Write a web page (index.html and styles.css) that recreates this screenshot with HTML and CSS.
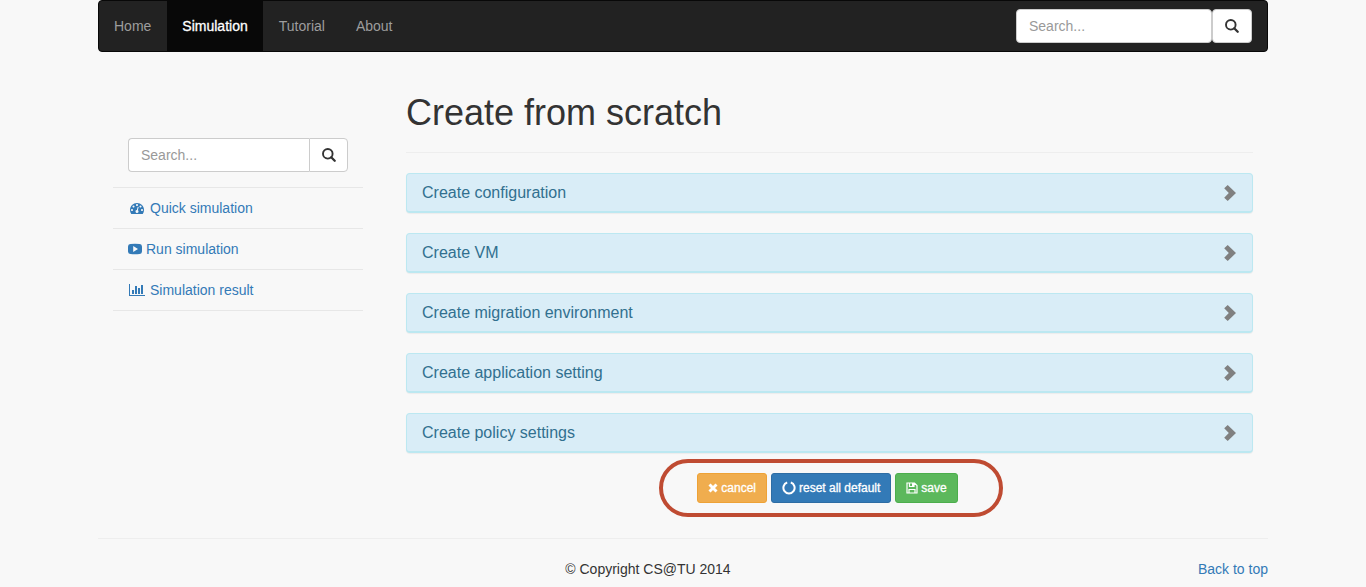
FILE: index.html
```html
<!DOCTYPE html>
<html lang="en">
<head>
<meta charset="utf-8">
<title>Create from scratch</title>
<link rel="stylesheet" href="styles.css">
</head>
<body>
<svg class="sprite" aria-hidden="true">
  <symbol id="search" viewBox="0 0 14 14"><circle cx="5.8" cy="5.8" r="4.8" fill="none" stroke="currentColor" stroke-width="1.9"/><path d="M9.2 9.2L12.7 12.7" fill="none" stroke="currentColor" stroke-width="2.3" stroke-linecap="round"/></symbol>
  <symbol id="chevron" viewBox="0 0 12 16"><path d="M3.7 0L12 8L3.7 16L0.2 12.700L4.800 8L0.2 3.300Z" fill="currentColor"/></symbol>
</svg>
<div class="container" id="top">
  <nav class="navbar">
    <ul class="nav">
      <li><a href="#">Home</a></li>
      <li><a href="#" class="active" aria-current="page">Simulation</a></li>
      <li><a href="#">Tutorial</a></li>
      <li><a href="#">About</a></li>
    </ul>
    <form class="search nav-search" role="search">
      <input type="text" placeholder="Search..." aria-label="Search site">
      <button type="button" aria-label="Search"><svg class="icon"><use href="#search"/></svg></button>
    </form>
  </nav>

  <div class="layout">
    <aside>
      <ul class="side-menu">
        <li>
          <form class="search side-search" role="search">
            <input type="text" placeholder="Search..." aria-label="Search simulations">
            <button type="button" aria-label="Search"><svg class="icon"><use href="#search"/></svg></button>
          </form>
        </li>
        <li><a href="#">
          <svg class="icon icon-wide" viewBox="0 0 1792 1792"><path fill="currentColor" d="M384 1152q0-53-37.500-90.500t-90.500-37.500-90.500 37.500-37.500 90.500 37.500 90.500 90.500 37.500 90.500-37.500 37.500-90.500zm192-448q0-53-37.500-90.500t-90.500-37.500-90.500 37.500-37.500 90.500 37.500 90.500 90.500 37.500 90.500-37.500 37.500-90.500zm428 481l101-382q6-26-7.500-48.500t-38.500-29.500-48 6.500-30 39.500l-101 382q-60 5-107 43.500t-63 98.500q-20 77 20 146t117 89 146-20 89-117q16-60-6-117t-72-91zm660-33q0-53-37.500-90.500t-90.500-37.500-90.500 37.500-37.500 90.500 37.500 90.500 90.500 37.500 90.500-37.500 37.500-90.500zm-640-640q0-53-37.500-90.500t-90.500-37.500-90.500 37.500-37.500 90.500 37.500 90.500 90.500 37.500 90.500-37.500 37.500-90.500zm448 192q0-53-37.500-90.500t-90.500-37.500-90.500 37.500-37.500 90.500 37.500 90.500 90.500 37.500 90.500-37.500 37.500-90.500zm320 448q0 261-141 483-19 29-54 29h-1402q-35 0-54-29-141-221-141-483 0-182 71-348t191-286 286-191 348-71 348 71 286 191 191 286 71 348z"/></svg>
          Quick simulation</a></li>
        <li><a href="#">
          <svg class="icon" viewBox="0 0 14 14"><path fill="currentColor" fill-rule="evenodd" d="M2.500 2Q7 1.600 11.500 2Q13.700 2.100 13.900 4Q14.200 7 13.900 10Q13.700 11.900 11.500 12Q7 12.400 2.500 12Q.3 11.900 .1 10Q-.2 7 .1 4Q.3 2.100 2.500 2ZM5.200 4V10L10 7Z"/></svg>
          Run simulation</a></li>
        <li><a href="#">
          <svg class="icon icon-wide" viewBox="0 0 18 14"><path fill="currentColor" d="M1 1H2V12H17V13H1ZM4 7H6V11H4ZM7 3H9V11H7ZM10 5H12V11H10ZM13 2H15V11H13Z"/></svg>
          Simulation result</a></li>
      </ul>
    </aside>

    <main>
      <h1>Create from scratch</h1>
      <div class="panels">
        <button type="button" class="panel">Create configuration<svg class="chevron"><use href="#chevron"/></svg></button>
        <button type="button" class="panel">Create VM<svg class="chevron"><use href="#chevron"/></svg></button>
        <button type="button" class="panel">Create migration environment<svg class="chevron"><use href="#chevron"/></svg></button>
        <button type="button" class="panel">Create application setting<svg class="chevron"><use href="#chevron"/></svg></button>
        <button type="button" class="panel">Create policy settings<svg class="chevron"><use href="#chevron"/></svg></button>
      </div>
      <div class="actions">
        <div class="action-group">
          <button type="button" class="btn cancel"><svg viewBox="0 0 10 12"><path d="M1.500 2.500L8.500 9.500M8.500 2.500L1.500 9.500" fill="none" stroke="currentColor" stroke-width="2.900"/></svg>cancel</button>
          <button type="button" class="btn reset"><svg class="notch" viewBox="0 0 14 14"><path d="M5.200 1.500A5.600 5.600 0 1 0 8.800 1.500" fill="none" stroke="currentColor" stroke-width="2"/></svg>reset all default</button>
          <button type="button" class="btn save"><svg class="disk" viewBox="0 0 12 12"><path d="M1 1H8.500L11 3.500V11H1ZM3.500 1V4.500H8V1M3 11V7.500H9V11" fill="none" stroke="currentColor" stroke-width="1.200"/><path d="M6 1H8V4.500H6Z" fill="currentColor"/></svg>save</button>
        </div>
      </div>
    </main>
  </div>

  <footer>
    <span>© Copyright CS@TU 2014</span>
    <a href="#top">Back to top</a>
  </footer>
</div>
</body>
</html>
```

FILE: styles.css
```css
* { box-sizing: border-box; }
body {
  margin: 0;
  background: #f8f8f8;
  color: #333;
  font: 14px/20px "Liberation Sans", Arial, sans-serif;
}
a { color: #337ab7; text-decoration: none; }
ul { list-style: none; margin: 0; padding: 0; }
button, input { font: inherit; }
button { cursor: pointer; }
.sprite { display: none; }
.container { max-width: 1170px; margin: 0 auto; }
.icon { width: 14px; height: 14px; flex: none; }
.icon-wide { width: 18px; }

.navbar {
  display: flex;
  justify-content: space-between;
  align-items: center;
  padding-right: 15px;
  background: #222;
  border: 1px solid #080808;
  border-radius: 4px;
}
.nav { display: flex; gap: 1px; }
.nav a { display: block; padding: 15px; color: #9d9d9d; }
.nav .active { background: #080808; color: #fff; -webkit-text-stroke: 0.3px #fff; }

.search { display: flex; }
.search input {
  flex: 1;
  min-width: 0;
  height: 34px;
  padding: 6px 12px;
  background: #fff;
  border: 1px solid #ccc;
  border-radius: 4px;
}
.search input::placeholder { color: #999; opacity: 1; }
.search button {
  display: flex;
  align-items: center;
  justify-content: center;
  width: 40px;
  padding: 0;
  background: #fff;
  border: 1px solid #ccc;
  border-radius: 4px;
  color: #333;
}
.nav-search { width: 236px; }
.side-search input { border-right: 0; border-radius: 4px 0 0 4px; }
.side-search button { width: 39px; border-radius: 0 4px 4px 0; }

.layout {
  display: grid;
  grid-template-columns: 250px minmax(0, 1fr);
  gap: 43px;
  padding: 0 15px;
}
aside { padding-top: 71px; }
.side-menu li { border-bottom: 1px solid #e7e7e7; }
.side-search { padding: 15px; }
.side-menu a { display: flex; align-items: center; gap: 4px; padding: 10px 15px; }

h1 {
  margin: 41px 0 20px;
  padding-bottom: 19px;
  border-bottom: 1px solid #eee;
  font-size: 36px;
  font-weight: 400;
  line-height: 40px;
}
.panels { display: grid; gap: 20px; }
.panel {
  display: flex;
  justify-content: space-between;
  align-items: center;
  height: 40px;
  padding: 0 16px 0 15px;
  background: #d9edf7;
  border: 1px solid #bce8f1;
  border-bottom-width: 2px;
  border-radius: 4px;
  box-shadow: 0 1px 1px rgba(0, 0, 0, 0.05);
  color: #31708f;
  font-size: 16px;
}
.chevron { width: 12px; height: 16px; color: #808080; }

.actions { display: flex; justify-content: center; padding: 20px 4px 35px 0; }
.action-group { position: relative; display: flex; gap: 4px; }
.action-group::after {
  content: "";
  position: absolute;
  inset: -14px -45px -14px -38px;
  border: 4px solid #bf4b32;
  border-radius: 29px;
  pointer-events: none;
}
.btn {
  display: flex;
  align-items: center;
  gap: 3px;
  height: 30px;
  padding: 0 10px;
  border: 1px solid;
  border-radius: 3px;
  color: #fff;
  font-size: 12px;
  -webkit-text-stroke: 0.3px #fff;
}
.btn svg { width: 10px; height: 12px; }
.btn .notch { width: 14px; height: 14px; }
.btn .disk { width: 12px; }
.cancel { background: #f0ad4e; border-color: #eea236; }
.reset { background: #337ab7; border-color: #2e6da4; }
.save { background: #5cb85c; border-color: #4cae4c; }

footer {
  display: flex;
  padding: 20px 0 10px;
  border-top: 1px solid #eee;
}
footer span { flex: 1; text-align: center; }
```
